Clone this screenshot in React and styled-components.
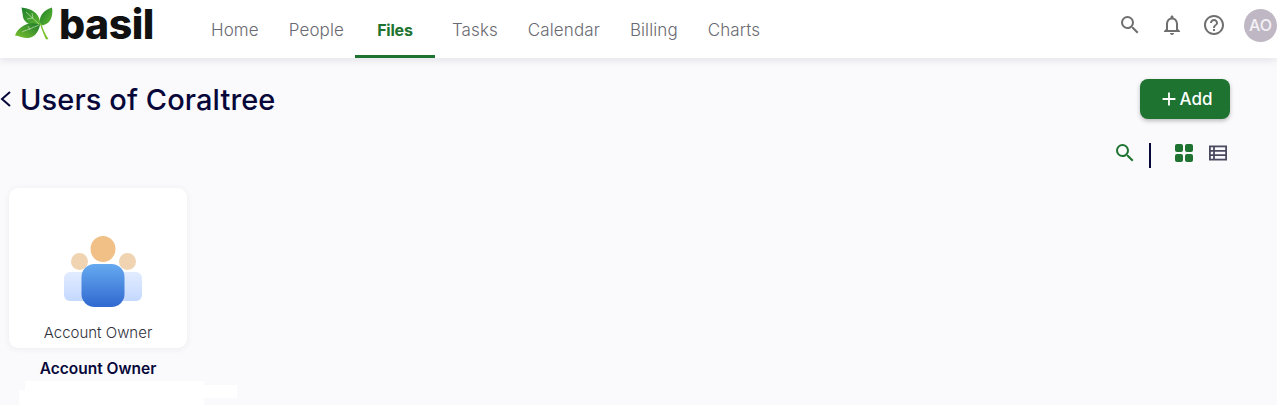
import styled, {createGlobalStyle} from "styled-components";
import {MdSearch, MdOutlineNotifications, MdHelpOutline, MdAdd} from "react-icons/md";

const GlobalStyle = createGlobalStyle`
  html, body {
    margin: 0;
    background: #fafafc;
    font-family: "Inter", "Liberation Sans", sans-serif;
    overflow: hidden;
  }
`

const Page = styled.div`
  position: relative;
  width: 1277px;
  height: 405px;
  overflow: hidden;
`

const Header = styled.header`
  display: flex;
  align-items: stretch;
  height: 58px;
  padding-left: 15px;
  background: #fff;
  box-shadow: 0 2px 8px rgba(60, 60, 100, 0.13);
`

const Brand = styled.div`
  display: flex;
  align-items: flex-start;
  width: 181px;
  gap: 6px;
  padding-top: 7px;
`

const BrandName = styled.span`
  margin-top: -6px;
  font-size: 41px;
  line-height: 46px;
  font-weight: 800;
  letter-spacing: -0.5px;
  color: #111;
`

const Nav = styled.nav`
  display: flex;
  flex: 1;
`

const NavItem = styled.a`
  box-sizing: border-box;
  display: flex;
  align-items: center;
  justify-content: center;
  min-width: ${p => (p.$active ? "80px" : "0")};
  padding: 5px ${p => (p.$active ? "0" : "15px")} 0;
  margin: ${p => (p.$active ? "0 2px 0 -4px" : "0")};
  font-size: ${p => (p.$active ? "16px" : "17px")};
  letter-spacing: ${p => (p.$active ? "-0.2px" : "0.1px")};
  font-weight: ${p => (p.$active ? 700 : 300)};
  color: ${p => (p.$active ? "#1e7330" : "#6a6a72")};
  border-bottom: 3px solid ${p => (p.$active ? "#1e7330" : "transparent")};
`

const HeaderTools = styled.div`
  display: flex;
  align-items: center;
  gap: 16px;
  padding-bottom: 8px;
`

const ToolIcon = styled.span`
  display: flex;
  width: 26px;
  justify-content: center;
  color: #6f6f6f;
  font-size: 24px;
`

const Avatar = styled.span`
  display: flex;
  align-items: center;
  justify-content: center;
  width: 33px;
  height: 33px;
  margin-left: 1px;
  border-radius: 50%;
  background: #bfb8c4;
  color: #f4f1f6;
  font-size: 16px;
  font-weight: 500;
`

const TitleRow = styled.div`
  display: flex;
  align-items: flex-start;
  justify-content: space-between;
  padding: 21px 47px 0 0;
`

const TitleGroup = styled.div`
  display: flex;
  align-items: center;
  height: 40px;
  gap: 8px;
`

const Title = styled.h1`
  margin: 0;
  font-size: 29px;
  font-weight: 500;
  letter-spacing: 0.1px;
  color: #07073a;
`

const AddButton = styled.button`
  display: flex;
  align-items: center;
  justify-content: center;
  gap: 0;
  width: 90px;
  height: 40px;
  padding: 0;
  border: 0;
  border-radius: 8px;
  background: #1e7330;
  box-shadow: 0 2px 4px rgba(0, 0, 0, 0.25);
  color: #fff;
  font-family: inherit;
  font-size: 17px;
  font-weight: 500;
`

const ViewBar = styled.div`
  display: flex;
  align-items: center;
  justify-content: flex-end;
  height: 26px;
  margin-top: 23px;
  padding-right: 50px;
`

const SearchButton = styled.span`
  display: flex;
  color: #1e7330;
  font-size: 24px;
  margin-bottom: 4px;
`

const Divider = styled.span`
  width: 2px;
  height: 25px;
  margin: 0 24px 0 12px;
  background: #07073a;
`

const ViewIcons = styled.div`
  display: flex;
  gap: 16px;
  margin-bottom: 4px;
`

const CardColumn = styled.div`
  display: flex;
  flex-direction: column;
  align-items: center;
  width: 178px;
  margin: 20px 0 0 9px;
`

const Card = styled.div`
  box-sizing: border-box;
  display: flex;
  flex-direction: column;
  align-items: center;
  width: 178px;
  height: 160px;
  padding-top: 48px;
  background: #fff;
  border-radius: 9px;
  box-shadow: 0 1px 6px rgba(60, 60, 100, 0.07);
`

const OwnerArt = styled.div`
  display: flex;
  margin-left: 10px;
`

const CardLabel = styled.span`
  margin-top: 15px;
  font-size: 15px;
  line-height: 20px;
  font-weight: 300;
  color: #30303a;
`

const CardCaption = styled.span`
  margin-top: 11px;
  font-size: 15.5px;
  line-height: 20px;
  font-weight: 600;
  color: #07073a;
`

const Redaction = styled.div`
  position: absolute;
  left: ${p => p.$x}px;
  top: ${p => p.$y}px;
  width: ${p => p.$w}px;
  height: ${p => p.$h}px;
  background: #fff;
`

const Leaves = () => (
  <svg width="38" height="33" viewBox="0 0 38 33">
    <defs>
      <linearGradient id="leafA" x1="0" y1="0" x2="1" y2="1">
        <stop offset="0" stopColor="#1c7f2c"/>
        <stop offset="1" stopColor="#62b82e"/>
      </linearGradient>
      <linearGradient id="leafB" x1="0" y1="1" x2="1" y2="0">
        <stop offset="0" stopColor="#7cc22f"/>
        <stop offset="1" stopColor="#1c7a2c"/>
      </linearGradient>
    </defs>
    <path d="M6.5 0.5 C14 1.5 25 4 25.5 18 C17 19.5 9.5 16.5 8 10 C7.5 6 7 3 6.5 0.5 Z" fill="url(#leafA)"/>
    <path d="M37 0.5 C38.5 9 35.5 18 26 18.5 C22.5 12 27 3.5 37 0.5 Z" fill="url(#leafA)"/>
    <path d="M0 28.5 C3 20 14 13 25 18 C23.5 26 18 31.5 12 31 C8 31 4 29 0 28.5 Z" fill="url(#leafB)"/>
    <path d="M25 17 L26.5 17 C28 22 30 27 33.5 32 L31 32.5 C28.5 27 26.5 22 25 17 Z" fill="#7cc22f"/>
    <path d="M11 5 L24 17 M17 6 L18 11 M12 12 L18 11 M7 25 L24 18 M13 19 L15 23" stroke="#d6eec8" strokeWidth="0.6" fill="none"/>
  </svg>
)

const ChevronLeft = () => (
  <svg width="12" height="18" viewBox="0 0 12 18">
    <path d="M10 2 L2 9 L10 16" stroke="#07073a" strokeWidth="2" fill="none"/>
  </svg>
)

const GridIcon = () => (
  <svg width="18" height="18" viewBox="0 0 18 18" fill="#1e7330">
    <rect x="0" y="0" width="8" height="8" rx="2"/>
    <rect x="10" y="0" width="8" height="8" rx="2"/>
    <rect x="0" y="10" width="8" height="8" rx="2"/>
    <rect x="10" y="10" width="8" height="8" rx="2"/>
  </svg>
)

const ListIcon = () => (
  <svg width="18" height="18" viewBox="0 0 18 18" fill="none" stroke="#4a4a60" strokeWidth="1.8">
    <rect x="0.9" y="2.4" width="16.2" height="13.2"/>
    <path d="M0.9 6.8 H17.1 M0.9 11.2 H17.1 M5 2.4 V15.6" />
  </svg>
)

const OwnerIcon = () => (
  <svg width="78" height="72" viewBox="0 0 78 72">
    <defs>
      <linearGradient id="sideBody" x1="0" y1="0" x2="0" y2="1">
        <stop offset="0" stopColor="#e2ecff"/>
        <stop offset="1" stopColor="#c4d8ff"/>
      </linearGradient>
      <linearGradient id="mainBody" x1="0" y1="0" x2="0" y2="1">
        <stop offset="0" stopColor="#66a9ef"/>
        <stop offset="1" stopColor="#3069d0"/>
      </linearGradient>
    </defs>
    <circle cx="15.5" cy="25.5" r="8.5" fill="#f0d3b0"/>
    <circle cx="63.5" cy="25.5" r="8.5" fill="#f0d3b0"/>
    <rect x="0" y="36" width="78" height="29" rx="6" fill="url(#sideBody)"/>
    <ellipse cx="39" cy="13" rx="12.5" ry="13" fill="#f1c086"/>
    <rect x="17.5" y="28" width="43" height="43" rx="13" fill="url(#mainBody)"/>
  </svg>
)

const links = ["Home", "People", "Files", "Tasks", "Calendar", "Billing", "Charts"];

export default function App() {
  return (
    <Page>
      <GlobalStyle/>
      <Header>
        <Brand>
          <Leaves/>
          <BrandName>basil</BrandName>
        </Brand>
        <Nav>
          {links.map(link => (
            <NavItem key={link} $active={link === "Files"}>{link}</NavItem>
          ))}
        </Nav>
        <HeaderTools>
          <ToolIcon><MdSearch/></ToolIcon>
          <ToolIcon><MdOutlineNotifications/></ToolIcon>
          <ToolIcon><MdHelpOutline/></ToolIcon>
          <Avatar>AO</Avatar>
        </HeaderTools>
      </Header>

      <TitleRow>
        <TitleGroup>
          <ChevronLeft/>
          <Title>Users of Coraltree</Title>
        </TitleGroup>
        <AddButton><MdAdd size={22}/>Add</AddButton>
      </TitleRow>

      <ViewBar>
        <SearchButton><MdSearch/></SearchButton>
        <Divider/>
        <ViewIcons>
          <GridIcon/>
          <ListIcon/>
        </ViewIcons>
      </ViewBar>

      <CardColumn>
        <Card>
          <OwnerArt><OwnerIcon/></OwnerArt>
          <CardLabel>Account Owner</CardLabel>
        </Card>
        <CardCaption>Account Owner</CardCaption>
      </CardColumn>

      <Redaction $x={25} $y={381} $w={179} $h={24}/>
      <Redaction $x={19} $y={390} $w={185} $h={15}/>
      <Redaction $x={204} $y={385} $w={33} $h={13}/>
    </Page>
  );
}
